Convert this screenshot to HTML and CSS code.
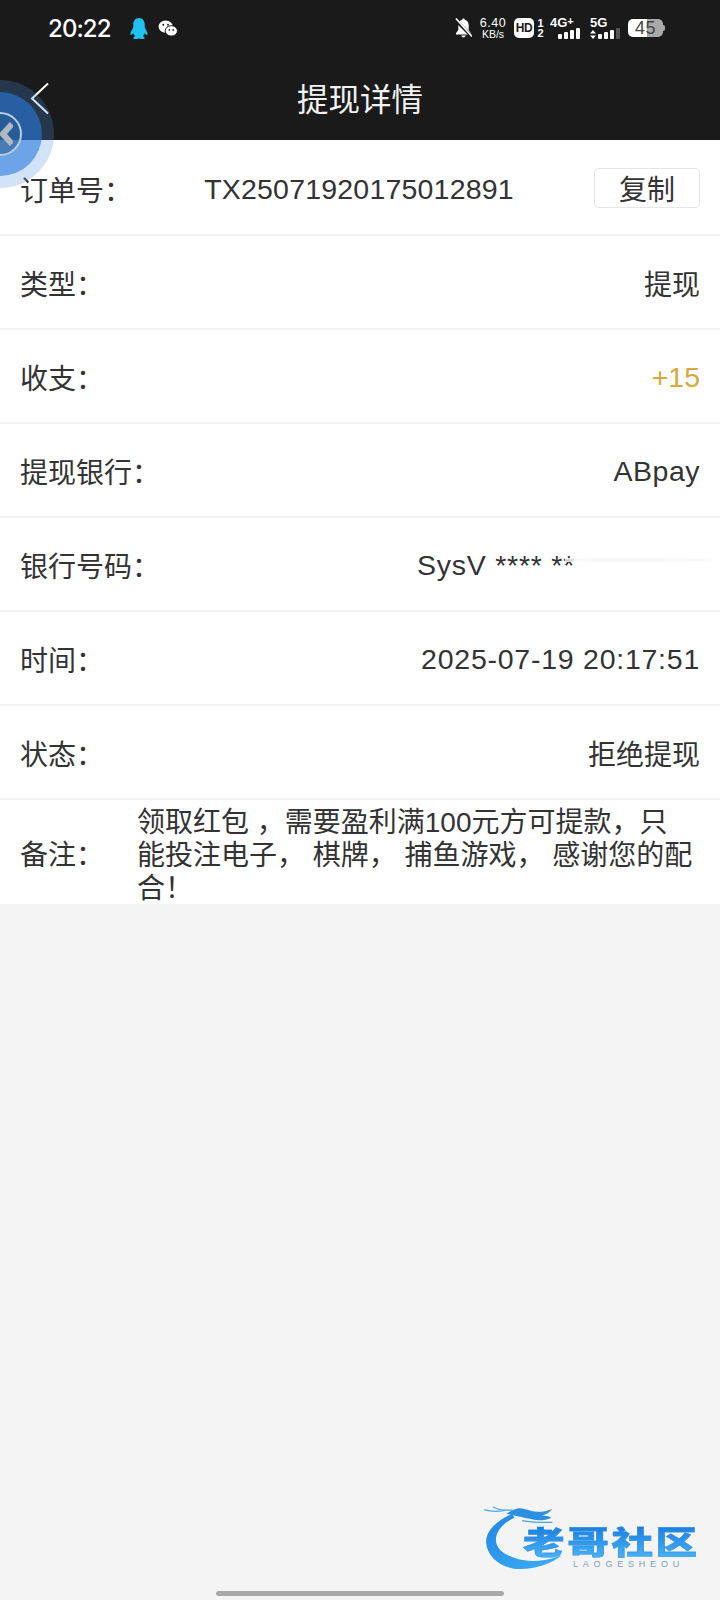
FILE: index.html
```html
<!DOCTYPE html>
<html lang="zh-CN">
<head>
<meta charset="utf-8">
<title>提现详情</title>
<link rel="stylesheet" href="styles.css">
</head>
<body>
<div class="page">
  <header class="top">
    <div class="status">
      <div class="status-left">
        <span class="time">20:22</span>
        <svg class="qq" viewBox="0 0 18 22"><path fill="#1fc0f2" d="M9 0C5 0 3 3 3 7v3c-1 2-3 5-3 7 0 1 1 1 2 0l1-1c.5 1.300 1 2 2 3-1 .5-2 1-2 2 0 .6 1 1 3 1 2 0 2-.5 3-.5s1 .5 3 .5c2 0 3-.4 3-1 0-1-1-1.500-2-2 1-1 1.500-1.700 2-3l1 1c1 1 2 1 2 0 0-2-2-5-3-7V7c0-4-2-7-6-7z"/></svg>
        <svg class="wx" viewBox="0 0 20 18"><ellipse cx="7.500" cy="7" rx="7.500" ry="6.500" fill="#fff"/><ellipse cx="13.500" cy="11.500" rx="6.500" ry="5.500" fill="#fff" stroke="#1a1a1a" stroke-width="1"/><circle cx="5" cy="5" r="1" fill="#1a1a1a"/><circle cx="10" cy="5" r="1" fill="#1a1a1a"/><circle cx="11.500" cy="10.500" r=".9" fill="#1a1a1a"/><circle cx="15.500" cy="10.500" r=".9" fill="#1a1a1a"/></svg>
      </div>
      <div class="status-right">
        <svg class="bell" viewBox="0 0 18 20"><path fill="#fff" d="M9 0c-.8 0-1.300.6-1.300 1.300C4.800 2 3.500 4.500 3.500 7v5L1 15.500V17h16v-1.500L14.500 12V7c0-2.500-1.300-5-4.200-5.700C10.300.6 9.800 0 9 0zM6.500 18c.4 1.200 1.400 2 2.500 2s2.100-.8 2.500-2z"/><path stroke="#1a1a1a" stroke-width="3.500" d="M0 1l18 18"/><path stroke="#fff" stroke-width="1.800" d="M1 0l17 19"/></svg>
        <span class="speed"><span>6.40</span><span class="speed-unit">KB/s</span></span>
        <span class="hd">HD</span>
        <span class="sims"><span>1</span><span>2</span></span>
        <span class="net net-4g"><span class="net-name">4G<sup class="plus">+</sup></span><span class="bars"><i class="b1"></i><i class="b2"></i><i class="b3"></i><i class="b4"></i></span></span>
        <span class="net net-5g"><span class="net-name">5G</span><svg class="updown" viewBox="0 0 6 9"><path fill="#fff" d="M3 0l3 3.500H0zM0 5.500h6L3 9z"/></svg><span class="bars"><i class="b1"></i><i class="b2"></i><i class="b3"></i><i class="b4 dim"></i></span></span>
        <span class="battery"><span class="battery-text">45</span></span>
      </div>
    </div>
    <nav class="nav">
      <svg class="back" viewBox="0 0 20 34"><path d="M18 1.500 2 16.500l16 15" fill="none" stroke="#fff" stroke-width="2"/></svg>
      <h1 class="title">提现详情</h1>
    </nav>
  </header>

  <main class="list">
    <div class="row"><span class="label">订单号：</span><span class="value latin order">TX25071920175012891</span><button class="copy">复制</button></div>
    <div class="row"><span class="label">类型：</span><span class="value">提现</span></div>
    <div class="row"><span class="label">收支：</span><span class="value latin income">+15</span></div>
    <div class="row"><span class="label">提现银行：</span><span class="value latin wide">ABpay</span></div>
    <div class="row row-masked"><span class="label">银行号码：</span><span class="value latin wider masked">SysV **** **</span><span class="smear"></span></div>
    <div class="row"><span class="label">时间：</span><span class="value latin wider">2025-07-19 20:17:51</span></div>
    <div class="row"><span class="label">状态：</span><span class="value">拒绝提现</span></div>
    <div class="row row-note"><span class="label note-label">备注：</span><p class="note">领取红包 ，需要盈利满100元方可提款，只能投注电子， 棋牌， 捕鱼游戏， 感谢您的配合！</p></div>
  </main>

  <div class="float-ball">
    <div class="float-inner">
      <div class="float-ring">
        <svg class="float-arrow" viewBox="0 0 14 24"><path d="M13 2 4 12l9 10" fill="none" stroke="#aeb9c4" stroke-width="6"/></svg>
      </div>
    </div>
  </div>

  <div class="logo">
    <svg class="dragon" viewBox="0 0 90 70">
      <defs><linearGradient id="dg" x1="0" y1="0" x2="1" y2="1"><stop offset="0" stop-color="#1f86e4"/><stop offset="1" stop-color="#3fb0f7"/></linearGradient></defs>
      <path fill="url(#dg)" d="M30 9C12 17 2 28 3 39 4 54 20 66 38 66 55 66 70 60 81 52 66 57 52 59 42 57 26 54 13 47 13 36 13 27 20 19 32 13z"/>
      <path fill="#2b90e2" d="M24 9c6-4 12-7 18-5 5 1 9 3 14 3 5 0 10-1 15-3-3 4-7 6-11 7 3 0 7 0 10 2-6 3-13 3-19 2-9-2-14-3-27-6z"/>
      <path fill="none" stroke="#4aa4ea" stroke-width="1.300" d="M1 5c8 2 16 2 24 0M10 2c6 3 12 4 20 3M40 16c8 2 20 2 31 2"/>
    </svg>
    <span class="logo-name">老哥社区</span>
    <span class="logo-sub">LAOGESHEOU</span>
  </div>

  <div class="home-bar"></div>
</div>
</body>
</html>
```

FILE: styles.css
```css
* { box-sizing: border-box; }
html, body { margin: 0; padding: 0; }
body {
  font-family: "Liberation Sans", "Noto Sans CJK SC", sans-serif;
  color: #333;
  background: #f4f4f4;
}
.page {
  position: relative;
  width: 720px;
  height: 1600px;
  overflow: hidden;
  background: #f4f4f4;
  display: flex;
  flex-direction: column;
}

/* header */
.top { background: #1a1a1a; color: #fff; height: 140px; flex: none; }
.status {
  height: 56px;
  padding: 0 57px 0 48px;
  display: flex;
  align-items: center;
  justify-content: space-between;
}
.status-left { display: flex; align-items: center; }
.time { font-family: Inter, sans-serif; font-size: 24px; font-weight: 500; letter-spacing: -.9px; width: 82px; }
.qq { width: 18px; height: 21px; }
.wx { width: 20px; height: 17px; margin-left: 10px; }
.status-right { display: flex; align-items: center; font-weight: 700; }
.bell { width: 17px; height: 20px; }
.speed { display: flex; flex-direction: column; align-items: center; font-size: 12.500px; line-height: 12px; font-weight: 400; margin-left: 8px; width: 26px; letter-spacing: .6px; }
.speed-unit { font-size: 10.500px; letter-spacing: 0; line-height: 10px; }
.hd {
  width: 20px; height: 20px; margin-left: 8px;
  background: #fff; color: #1a1a1a; border-radius: 5px;
  font-size: 12px; line-height: 20px; text-align: center; letter-spacing: -.5px;
}
.sims { display: flex; flex-direction: column; align-items: center; font-size: 11px; line-height: 10px; margin-left: 3px; width: 7px; }
.net { position: relative; display: block; height: 22px; }
.net-4g { width: 32px; margin-left: 6px; }
.net-5g { width: 32px; margin-left: 8px; }
.net-name { position: absolute; left: 0; top: -1px; font-size: 13px; line-height: 13px; white-space: nowrap; }
.plus { font-size: 11px; line-height: 0; vertical-align: 2px; }
.bars { position: absolute; left: 8px; bottom: 0; display: flex; align-items: flex-end; gap: 2px; }
.bars i { display: block; width: 4px; background: #fff; border-radius: 1px; }
.updown { position: absolute; left: 0; bottom: 0; width: 6px; height: 9px; }
.b1 { height: 5px; }
.b2 { height: 7px; }
.b3 { height: 9px; }
.b4 { height: 11px; }
.bars .dim { background: #555; }
.battery {
  position: relative;
  width: 35px; height: 18px; margin-left: 6px;
  border-radius: 5px;
  background: linear-gradient(to right, #fff 0 55%, #a9a9a9 55% 100%);
  color: #444;
  font-size: 18px; line-height: 18px; font-weight: 400; text-align: center; letter-spacing: .5px;
}
.battery::after {
  content: "";
  position: absolute; right: -2px; top: 6px;
  width: 2px; height: 6px;
  border-radius: 0 2px 2px 0;
  background: #a9a9a9;
}
.nav { position: relative; height: 84px; display: flex; align-items: center; justify-content: center; padding-bottom: 2px; }
.back { position: absolute; left: 30px; top: 26px; width: 20px; height: 34px; }
.title { margin: 0; font-size: 31.500px; font-weight: 400; color: #f2f2f2; }

/* rows */
.list { background: #fff; flex: none; padding-top: 2px; }
.row {
  position: relative;
  height: 94px;
  padding: 0 20px;
  border-bottom: 2px solid #f3f3f3;
  display: flex;
  align-items: center;
  justify-content: space-between;
  font-size: 28px;
  line-height: 40px;
  white-space: nowrap;
}
.label, .value { position: relative; top: 4px; }
.value { color: #333; }
.latin { font-size: 28.500px; letter-spacing: .4px; top: 1px; }
.order { letter-spacing: .2px; margin-right: 8px; }
.wide { letter-spacing: .5px; }
.wider { letter-spacing: .75px; }
.income { color: #d8a93c; letter-spacing: 0; }
.masked { margin-right: 125px; }
.smear {
  position: absolute;
  left: 565px; right: 0; top: 40px;
  height: 4px;
  background: linear-gradient(to right, rgba(255, 255, 255, .75), #f6f6f6 20%, #f9f9f9 80%, #fff);
}
.copy {
  width: 106px; height: 40px;
  padding: 6px 0 0;
  background: #fff;
  border: 1px solid #e6e6e6;
  border-radius: 4px;
  font: inherit;
  line-height: 30px;
  color: #333;
}
.row-note {
  height: 104px;
  border-bottom: 0;
  justify-content: flex-start;
  white-space: normal;
}
.note-label { width: 117px; flex: none; }
.note { position: relative; top: 3px; margin: 0; width: 557px; line-height: 33px; word-break: break-all; flex: none; }

/* floating ball */
.float-ball {
  position: absolute;
  left: -54px; top: 80px;
  width: 108px; height: 108px;
  border-radius: 50%;
  background: rgba(74, 144, 226, .25);
  display: flex; align-items: center; justify-content: center;
}
.float-inner {
  width: 84px; height: 84px; border-radius: 50%;
  background: rgba(40, 122, 220, .6);
  display: flex; align-items: center; justify-content: center;
}
.float-ring {
  width: 44px; height: 44px; border-radius: 50%;
  border: 2px solid #b9cde0;
  background: rgba(40, 90, 140, .55);
  display: flex; align-items: center; justify-content: flex-end;
  padding-right: 7px;
}
.float-arrow { width: 14px; height: 24px; }

/* watermark logo */
.logo { position: absolute; left: 482px; top: 1505px; width: 222px; height: 68px; }
.dragon { position: absolute; left: 0; top: 0; width: 90px; height: 68px; }
.logo-name {
  position: absolute; left: 41px; top: 22px;
  font-size: 32px; line-height: 32px; font-weight: 900;
  letter-spacing: 2px; white-space: nowrap;
  transform: scaleX(1.300);
  transform-origin: left center;
  background: linear-gradient(to bottom, #1c7fe0, #4ab4f7);
  -webkit-background-clip: text; background-clip: text;
  color: transparent;
  -webkit-text-stroke: .4px #2b8ee8;
}
.logo-sub {
  position: absolute; left: 91px; top: 54px;
  font-size: 9px; line-height: 11px; letter-spacing: 4.800px; color: #7f9fc0;
  white-space: nowrap;
}

.home-bar {
  position: absolute; left: 216px; bottom: 4px;
  width: 288px; height: 5px; border-radius: 3px;
  background: #a9a9a9;
}
```
